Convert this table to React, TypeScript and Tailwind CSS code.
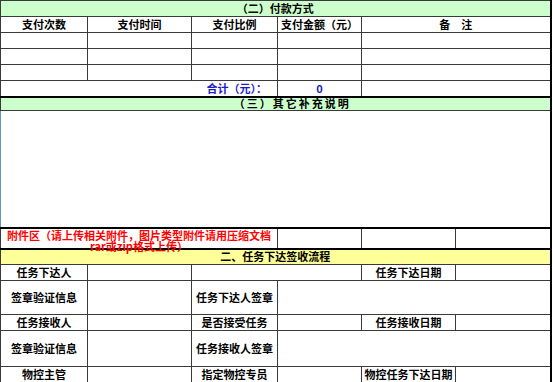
const cell = "border border-[#3a3a3a] p-0 text-center align-middle";
const label = `${cell} font-bold text-[11px] text-black`;

function Blank({ span = 1 }: { span?: number }) {
  return <td colSpan={span} className={cell} />;
}

function Label({ text, span = 1 }: { text: string; span?: number }) {
  return (
    <td colSpan={span} className={label}>
      {text}
    </td>
  );
}

export default function App() {
  return (
    <div className="h-[382px] w-[553px] overflow-hidden bg-white font-['Noto_Sans_CJK_SC','Noto_Sans',sans-serif] leading-none">
      <table className="w-[551px] table-fixed border-collapse border-r-2 border-r-black">
        <colgroup>
          <col className="w-[87px]" />
          <col className="w-[104px]" />
          <col className="w-[86px]" />
          <col className="w-[84px]" />
          <col className="w-[94px]" />
          <col className="w-[95px]" />
        </colgroup>
        <tbody>
          {/* (二) 付款方式 */}
          <tr className="h-[16px]">
            <td colSpan={6} className={`${label} bg-[#ccffcc]`}>
              （二）付款方式
            </td>
          </tr>
          <tr className="h-[16px]">
            <Label text="支付次数" />
            <Label text="支付时间" />
            <Label text="支付比例" />
            <Label text="支付金额（元）" />
            <Label text="备　注" span={2} />
          </tr>
          {[0, 1, 2].map((i) => (
            <tr key={i} className="h-[16px]">
              <Blank />
              <Blank />
              <Blank />
              <Blank />
              <Blank span={2} />
            </tr>
          ))}
          <tr className="h-[16px]">
            <td
              colSpan={3}
              className={`${cell} pr-[10px] text-right text-[11px] font-bold text-[#1c1cc8]`}
            >
              合计（元）：
            </td>
            <td className={`${cell} text-[11px] font-bold text-[#1c1cc8]`}>0</td>
            <Blank span={2} />
          </tr>

          {/* (三) 其它补充说明 */}
          <tr className="h-[14px]">
            <td
              colSpan={6}
              className={`${label} border-t-2 border-t-black bg-[#ccffcc] pl-[34px] tracking-[2px]`}
            >
              （三）其它补充说明
            </td>
          </tr>
          <tr className="h-[117px]">
            <td colSpan={6} className={`${cell} border-l-[#6b8fd6]`} />
          </tr>
          <tr className="h-[19px]">
            <td
              colSpan={3}
              className={`${cell} border-t-2 border-t-black text-[11px] font-bold text-[#ff0000]`}
            >
              <div className="h-[19px] pt-[1px] leading-[11px]">
                附件区（请上传相关附件，图片类型附件请用压缩文档
                <br />
                rar或zip格式上传）
              </div>
            </td>
            <td className={`${cell} border-t-2 border-t-black`} />
            <td className={`${cell} border-t-2 border-t-black`} />
            <td className={`${cell} border-t-2 border-t-black`} />
          </tr>

          {/* 二、任务下达签收流程 */}
          <tr className="h-[16px]">
            <td
              colSpan={6}
              className={`${label} border-t-2 border-t-black bg-[#ffff99]`}
            >
              二、任务下达签收流程
            </td>
          </tr>
          <tr className="h-[16px]">
            <Label text="任务下达人" />
            <Blank />
            <Blank span={2} />
            <Label text="任务下达日期" />
            <Blank />
          </tr>
          <tr className="h-[34px]">
            <Label text="签章验证信息" />
            <Blank />
            <Label text="任务下达人签章" />
            <Blank span={3} />
          </tr>
          <tr className="h-[16px]">
            <Label text="任务接收人" />
            <Blank />
            <Label text="是否接受任务" />
            <Blank />
            <Label text="任务接收日期" />
            <Blank />
          </tr>
          <tr className="h-[36px]">
            <Label text="签章验证信息" />
            <Blank />
            <Label text="任务接收人签章" />
            <Blank span={3} />
          </tr>
          <tr className="h-[16px]">
            <Label text="物控主管" />
            <Blank />
            <Label text="指定物控专员" />
            <Blank />
            <Label text="物控任务下达日期" />
            <Blank />
          </tr>
        </tbody>
      </table>
    </div>
  );
}
